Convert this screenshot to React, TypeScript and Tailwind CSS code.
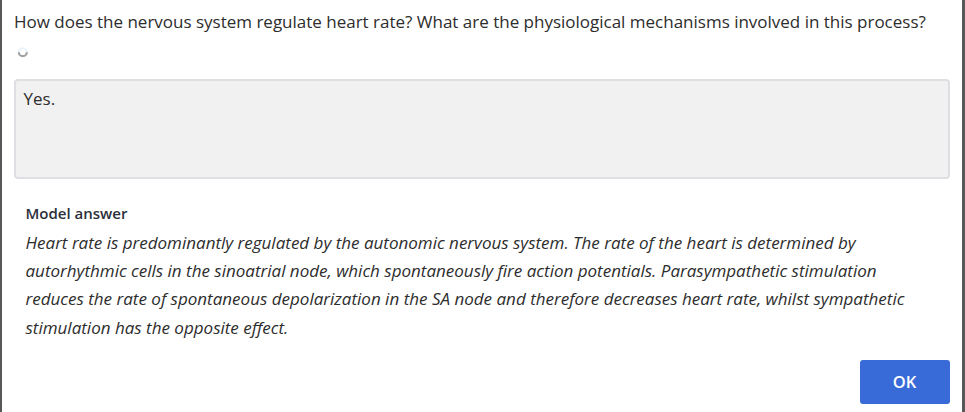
import React from "react";

const answerLines: string[] = [
  "Heart rate is predominantly regulated by the autonomic nervous system. The rate of the heart is determined by",
  "autorhythmic cells in the sinoatrial node, which spontaneously fire action potentials. Parasympathetic stimulation",
  "reduces the rate of spontaneous depolarization in the SA node and therefore decreases heart rate, whilst sympathetic",
  "stimulation has the opposite effect.",
];

export default function App() {
  return (
    <main className="flex h-[412px] w-[965px] flex-col overflow-hidden border-l-2 border-r-[3px] border-[#58585a] bg-white pl-3 pr-3 font-['Open_Sans',sans-serif] text-[17px] text-[#2d2d2d]">
      <p className="mt-[10px] h-6 whitespace-nowrap leading-6 tracking-[-0.005px]">
        How does the nervous system regulate heart rate? What are the physiological mechanisms involved in this process?
      </p>
      <svg className="ml-[3px] mt-[12px] h-[13px] w-[12px]" viewBox="0 0 12 13" fill="none">
        <circle cx="5.8" cy="6.2" r="4" stroke="#e9f4fd" strokeWidth="2" />
        <path d="M1.8 6.2A4 4 0 0 0 9.8 6.2" stroke="#a3a3a3" strokeWidth="2.2" />
      </svg>
      <div className="mt-5 h-[100px] shrink-0 rounded-[4px] border-2 border-[#dfdfe3] bg-[#f1f1f1] px-[7.5px] pt-[6px] leading-6">
        Yes.
      </div>
      <section className="ml-[11.5px] mt-[20px]">
        <h2 className="text-[15px] font-semibold leading-7 text-[#2b303a]">Model answer</h2>
        <div className="mt-[1.75px] italic leading-[28.3px]">
          {answerLines.map((line) => (
            <p key={line} className="whitespace-nowrap">{line}</p>
          ))}
        </div>
      </section>
      <button className="mt-[18px] h-11 w-[90px] shrink-0 self-end rounded-[3px] bg-[#386bd7] pr-[1px] text-[16.5px] font-semibold text-white">
        OK
      </button>
    </main>
  );
}
